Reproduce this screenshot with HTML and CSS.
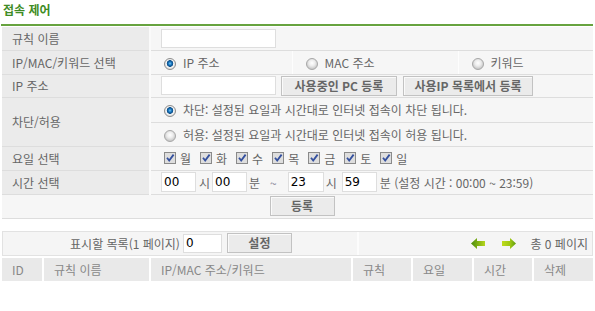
FILE: index.html
```html
<!DOCTYPE html>
<html lang="ko">
<head>
<meta charset="utf-8">
<link rel="stylesheet" href="styles.css">
</head>
<body>
<div class="page">
  <h1 class="title">접속 제어</h1>
  <div class="rule"></div>
  <table class="form">
    <colgroup><col class="c-label"><col class="c-a"><col class="c-b"><col class="c-c"></colgroup>
    <tr class="short">
      <th>규칙 이름</th>
      <td colspan="3"><input class="txt" type="text"></td>
    </tr>
    <tr>
      <th>IP/MAC/키워드 선택</th>
      <td><span class="radio on"></span>IP 주소</td>
      <td class="sep"><span class="radio"></span>MAC 주소</td>
      <td class="sep"><span class="radio"></span>키워드</td>
    </tr>
    <tr class="short">
      <th>IP 주소</th>
      <td colspan="3"><div class="line"><input class="txt" type="text"><button class="btn">사용중인 PC 등록</button><button class="btn wide">사용IP 목록에서 등록</button></div></td>
    </tr>
    <tr class="tall">
      <th rowspan="2">차단/허용</th>
      <td colspan="3"><span class="radio on"></span>차단: 설정된 요일과 시간대로 인터넷 접속이 차단 됩니다.</td>
    </tr>
    <tr>
      <td colspan="3"><span class="radio"></span>허용: 설정된 요일과 시간대로 인터넷 접속이 허용 됩니다.</td>
    </tr>
    <tr>
      <th>요일 선택</th>
      <td colspan="3">
        <div class="days">
          <span class="day"><svg class="cb" width="12" height="12" viewBox="0 0 12 12"><rect x="0.5" y="0.5" width="11" height="11" fill="#dedede" stroke="#8a8a8a"/><path d="M3 5.8 L5.2 8.6 L9.6 2.6" fill="none" stroke="#34509e" stroke-width="1.8"/></svg>월</span>
          <span class="day"><svg class="cb" width="12" height="12" viewBox="0 0 12 12"><rect x="0.5" y="0.5" width="11" height="11" fill="#dedede" stroke="#8a8a8a"/><path d="M3 5.8 L5.2 8.6 L9.6 2.6" fill="none" stroke="#34509e" stroke-width="1.8"/></svg>화</span>
          <span class="day"><svg class="cb" width="12" height="12" viewBox="0 0 12 12"><rect x="0.5" y="0.5" width="11" height="11" fill="#dedede" stroke="#8a8a8a"/><path d="M3 5.8 L5.2 8.6 L9.6 2.6" fill="none" stroke="#34509e" stroke-width="1.8"/></svg>수</span>
          <span class="day"><svg class="cb" width="12" height="12" viewBox="0 0 12 12"><rect x="0.5" y="0.5" width="11" height="11" fill="#dedede" stroke="#8a8a8a"/><path d="M3 5.8 L5.2 8.6 L9.6 2.6" fill="none" stroke="#34509e" stroke-width="1.8"/></svg>목</span>
          <span class="day"><svg class="cb" width="12" height="12" viewBox="0 0 12 12"><rect x="0.5" y="0.5" width="11" height="11" fill="#dedede" stroke="#8a8a8a"/><path d="M3 5.8 L5.2 8.6 L9.6 2.6" fill="none" stroke="#34509e" stroke-width="1.8"/></svg>금</span>
          <span class="day"><svg class="cb" width="12" height="12" viewBox="0 0 12 12"><rect x="0.5" y="0.5" width="11" height="11" fill="#dedede" stroke="#8a8a8a"/><path d="M3 5.8 L5.2 8.6 L9.6 2.6" fill="none" stroke="#34509e" stroke-width="1.8"/></svg>토</span>
          <span class="day"><svg class="cb" width="12" height="12" viewBox="0 0 12 12"><rect x="0.5" y="0.5" width="11" height="11" fill="#dedede" stroke="#8a8a8a"/><path d="M3 5.8 L5.2 8.6 L9.6 2.6" fill="none" stroke="#34509e" stroke-width="1.8"/></svg>일</span>
        </div>
      </td>
    </tr>
    <tr>
      <th>시간 선택</th>
      <td colspan="3">
        <div class="time">
          <input class="tm" type="text" value="00">
          <span class="u1">시</span>
          <input class="tm" type="text" value="00">
          <span class="u2">분</span>
          <span class="tilde">~</span>
          <input class="tm t3" type="text" value="23">
          <span class="u2">시</span>
          <input class="tm t4" type="text" value="59">
          <span class="u3">분 (설정 시간 : 00:00 ~ 23:59)</span>
        </div>
      </td>
    </tr>
    <tr>
      <td colspan="4" class="submit"><button class="btn reg">등록</button></td>
    </tr>
  </table>

  <div class="pager">
    <div class="pager-left">
      <span>표시할 목록(1 페이지)</span><input class="cnt" type="text" value="0"><button class="btn set">설정</button>
    </div>
    <div class="pager-right">
      <svg class="arrow" width="15" height="11" viewBox="0 0 15 11"><defs><linearGradient id="gl" x1="0" y1="0" x2="1" y2="0"><stop offset="0" stop-color="#4a8c0c"/><stop offset="1" stop-color="#b6d61c"/></linearGradient></defs><polygon points="0,5.5 6,0 6,3 14,3 14,8 6,8 6,11" fill="url(#gl)"/></svg>
      <svg class="arrow right" width="15" height="11" viewBox="0 0 15 11"><defs><linearGradient id="gr" x1="0" y1="0" x2="1" y2="0"><stop offset="0" stop-color="#c0dc1c"/><stop offset="0.6" stop-color="#9cc614"/><stop offset="1" stop-color="#5e9c0e"/></linearGradient></defs><polygon points="14,5.5 8,0 8,3 0,3 0,8 8,8 8,11" fill="url(#gr)"/></svg>
      <span class="total">총 0 페이지</span>
    </div>
  </div>

  <div class="thead">
    <div class="hc">ID</div>
    <div class="hc">규칙 이름</div>
    <div class="hc">IP/MAC 주소/키워드</div>
    <div class="hc">규칙</div>
    <div class="hc">요일</div>
    <div class="hc">시간</div>
    <div class="hc">삭제</div>
  </div>
</div>
</body>
</html>
```
FILE: styles.css
```css
* { box-sizing: border-box; }
body {
  margin: 0;
  background: #fff;
  font-family: "Noto Sans CJK KR", "Noto Sans", sans-serif;
  font-size: 12px;
  color: #666;
}
.page { padding: 0 2px; }
.title {
  margin: 0;
  height: 24px;
  padding: 2px 0 0 1px;
  font-size: 12px;
  line-height: 16px;
  font-weight: bold;
  color: #3f8c25;
}
.rule {
  height: 2px;
  margin: 0 0 1px -1px;
  background: #67a33f;
}
.form {
  width: 591px;
  border-collapse: collapse;
  table-layout: fixed;
}
.c-label { width: 148px; }
.c-a { width: 142px; }
.c-b { width: 166px; }
.c-c { width: 135px; }
.form th, .form td {
  height: 24px;
  padding: 0 0 0 10px;
  border-bottom: 1px solid #dddddd;
  vertical-align: middle;
  white-space: nowrap;
}
.form th {
  background: #ebebeb;
  font-weight: normal;
  text-align: left;
  border-right: 2px solid #fafafa;
}
.form td { background: #f6f6f6; }
.form td.sep { border-left: 1px solid #fdfdfd; }
.form tr.short td, .form tr.short th { height: 23px; }
.form tr.tall td { height: 25px; }

.radio {
  display: inline-block;
  width: 12px;
  height: 12px;
  margin: 0 7px 0 3px;
  border-radius: 50%;
  border: 1px solid #a8a8a8;
  background: radial-gradient(circle at 50% 40%, #ffffff 0, #ececec 3px, #c6c6c6 6px);
  vertical-align: -2px;
}
.radio.on {
  border-color: #8e8e8e;
  background: radial-gradient(circle at 50% 45%, #7cc8f4 0, #1a78c0 1.6px, #0a4a84 3px, #f6f6f6 3.6px, #d8d8d8 6px);
}
.line { display: flex; align-items: center; }
.txt {
  width: 115px;
  height: 19px;
  border: 1px solid #dedede;
  background: #fff;
  padding: 0 2px;
  font: 12px "DejaVu Sans", sans-serif;
  color: #000;
  vertical-align: middle;
}
.btn {
  height: 20px;
  padding: 0 6px;
  border: 1px solid #c2c2c2;
  box-shadow: inset 1px 1px 0 #fafafa;
  background: #ebebeb;
  font-family: "Noto Sans CJK KR", sans-serif;
  font-size: 12px;
  font-weight: bold;
  color: #666;
  line-height: 16px;
}
.line .btn { margin-left: 5px; width: 116px; }
.line .btn.wide { margin-left: 6px; width: 130px; }

.days { display: flex; align-items: center; }
.day { display: flex; align-items: center; margin-right: 6px; }
.cb { margin: 0 4px 0 3px; flex: none; }

.time { display: flex; align-items: center; }
.tm {
  width: 35px;
  height: 20px;
  border: 1px solid #dedede;
  background: #fff;
  padding: 0 2px;
  font: 12px "DejaVu Sans", sans-serif;
  color: #000;
}
.u1 { margin: 0 2px 0 3px; }
.u2 { margin: 0 0 0 2px; width: 14px; }
.tilde { margin-left: 7px; color: #889; }
.t3 { margin-left: 11px; width: 36px; }
.t4 { margin-left: 2px; }
.u3 { margin-left: 3px; }

.submit { text-align: center; padding: 0 0 0 9px !important; }
.reg { width: 65px; }

.pager {
  display: flex;
  margin-top: 12px;
  width: 591px;
  height: 25px;
  border: 1px solid #e2e2e2;
  background: #f5f5f5;
}
.pager-left {
  width: 354px;
  display: flex;
  align-items: center;
  justify-content: center;
  padding-left: 2px;
}
.cnt {
  width: 39px;
  height: 19px;
  margin-left: 3px;
  border: 1px solid #dedede;
  background: #fff;
  padding: 0 2px;
  font: 12px "DejaVu Sans", sans-serif;
  color: #000;
}
.set { width: 65px; margin-left: 5px; }
.pager-right {
  flex: 1;
  display: flex;
  align-items: center;
  justify-content: flex-end;
  padding-right: 4px;
  border-left: 2px solid #fcfcfc;
}
.arrow { flex: none; }
.arrow.right { margin-left: 16px; }
.total { margin-left: 13px; }

.thead {
  display: grid;
  grid-template-columns: 40px 105px 200px 58px 59px 58px 59px;
  column-gap: 2px;
  margin-top: 2px;
  width: 591px;
}
.hc {
  height: 23px;
  line-height: 23px;
  padding-left: 10px;
  background: #e9e9e9;
  color: #888;
  white-space: nowrap;
}
```
